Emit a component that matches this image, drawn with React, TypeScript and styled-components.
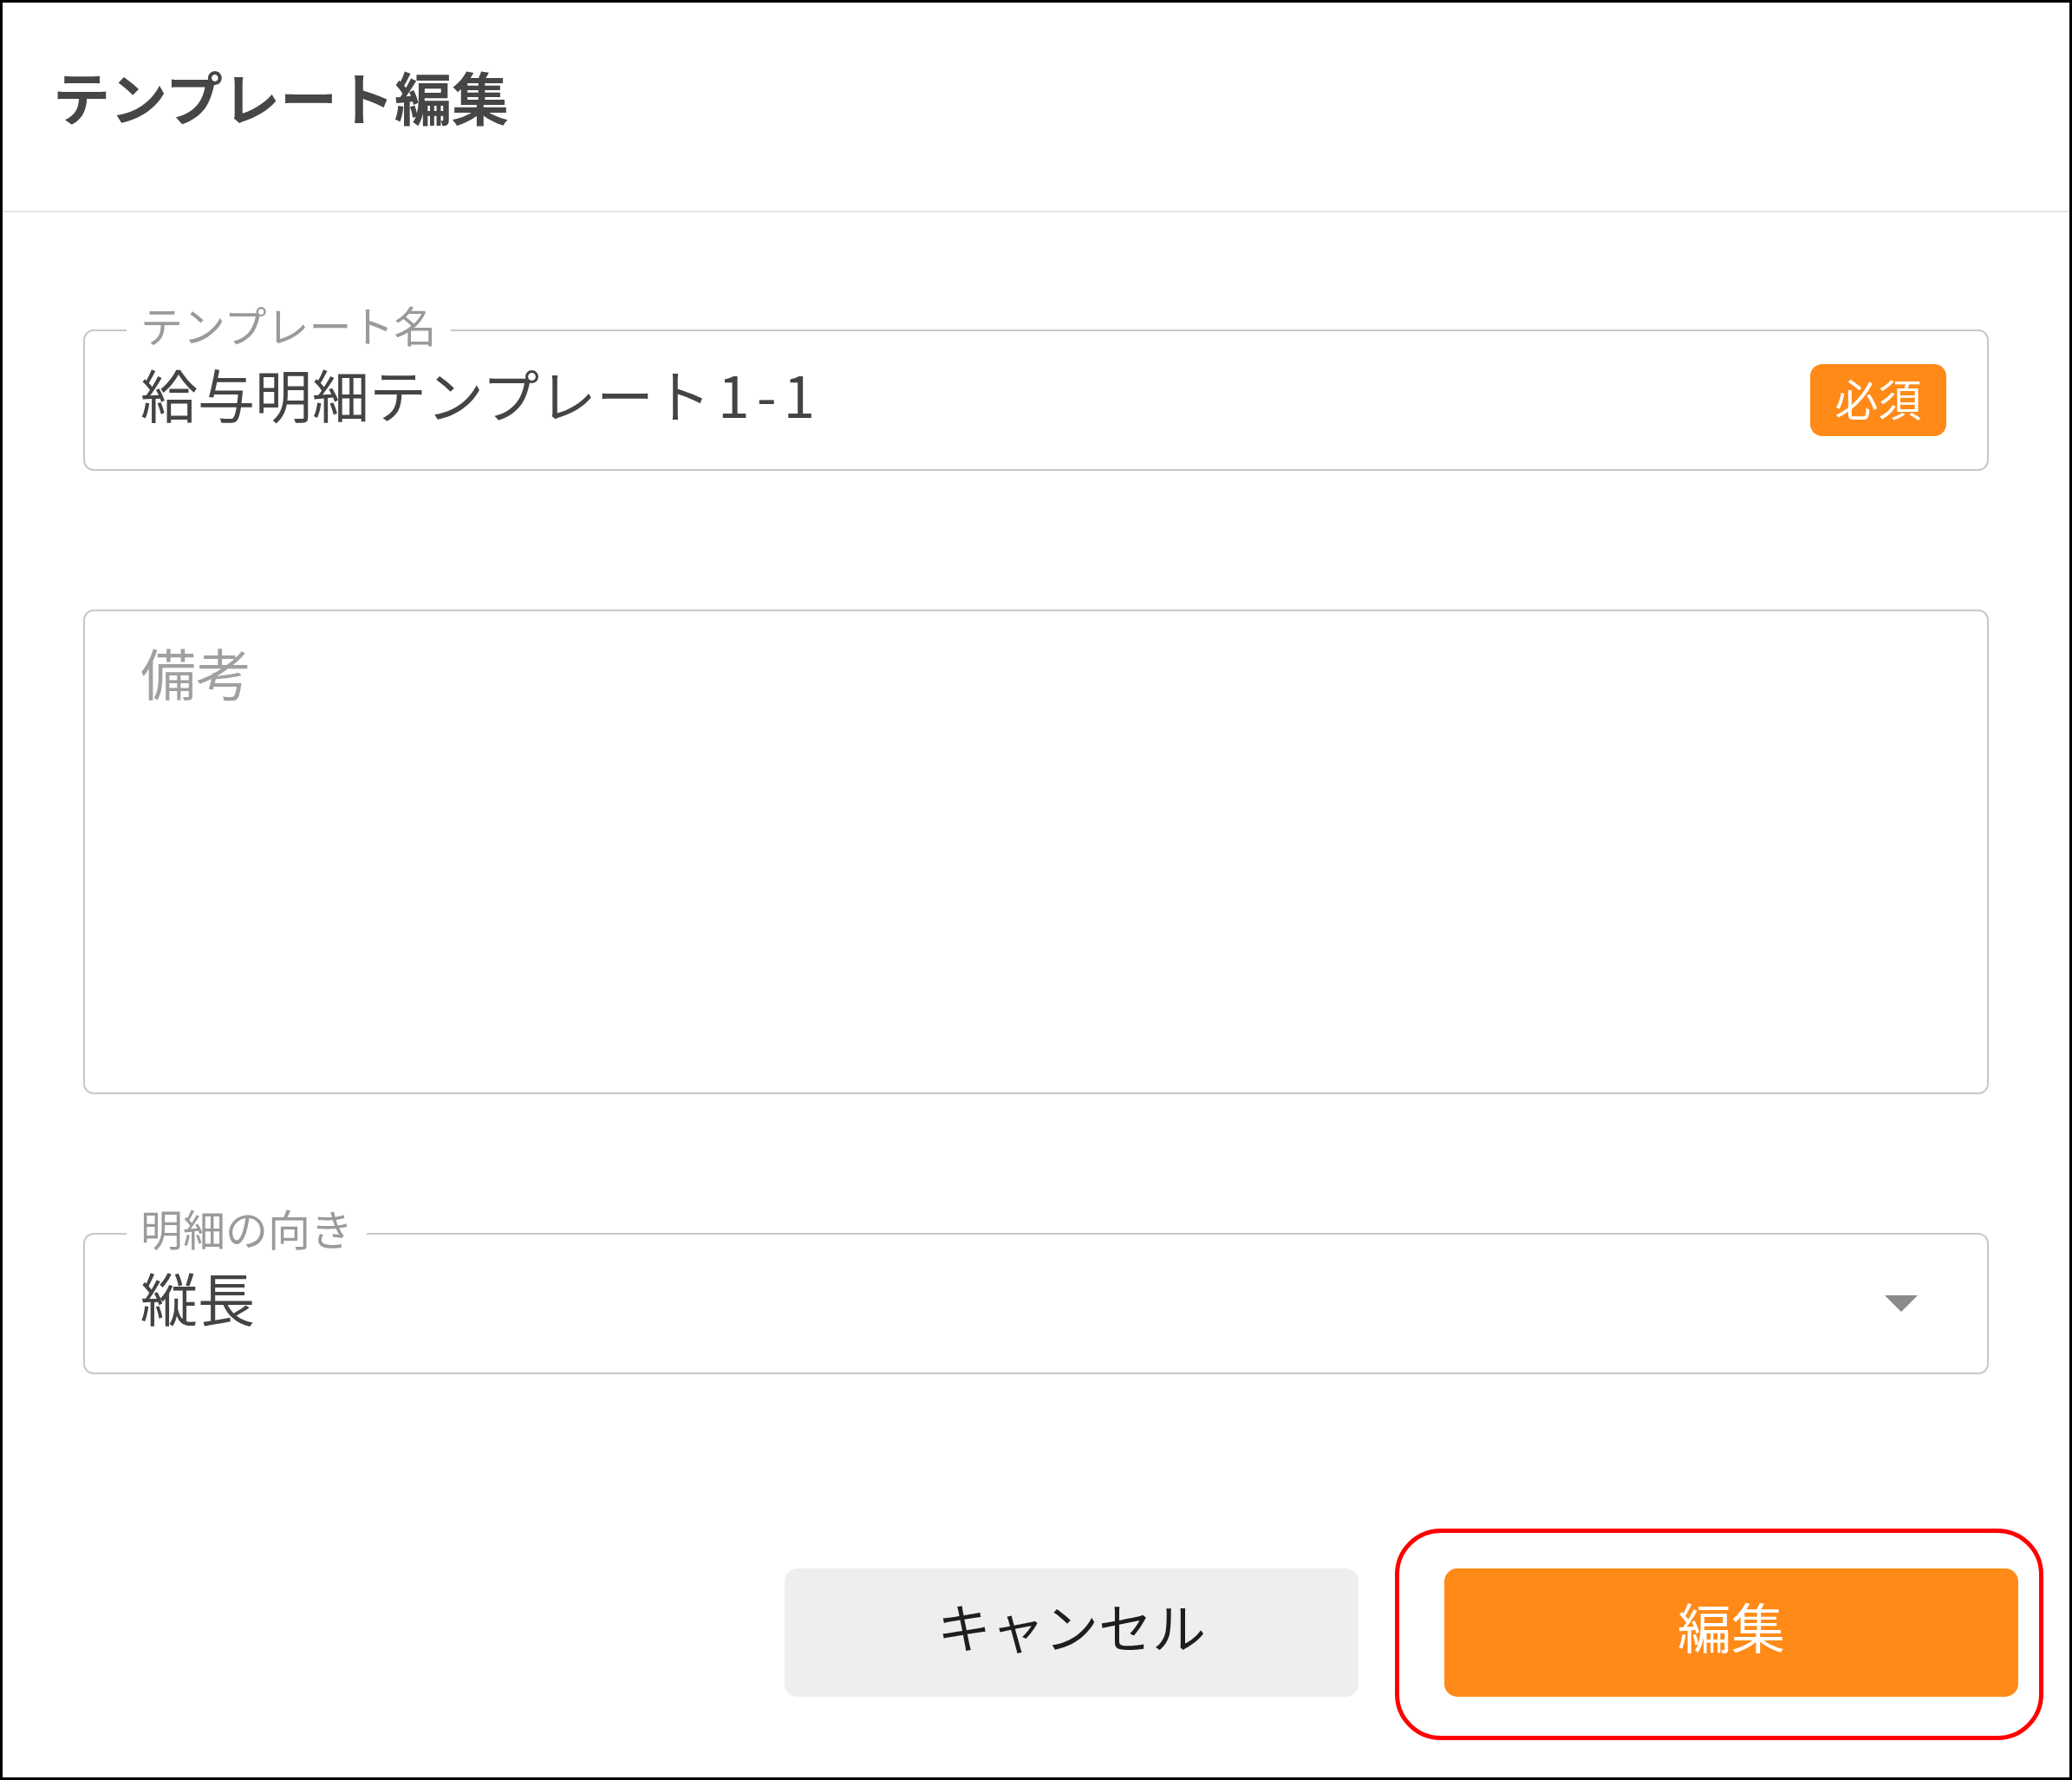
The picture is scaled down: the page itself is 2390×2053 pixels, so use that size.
import React from "react";
import styled, { createGlobalStyle } from "styled-components";

const GlobalStyle = createGlobalStyle`
  html, body { margin: 0; padding: 0; background: #ffffff; }
  * { box-sizing: border-box; }
  body { font-family: "Noto Sans CJK JP", "Noto Sans", sans-serif; }
`;

const FONT = `"Noto Sans CJK JP", "Noto Sans", sans-serif`;

const Frame = styled.div`
  width: 2390px;
  height: 2053px;
  border: 3px solid #000000;
  background: #ffffff;
  display: flex;
  flex-direction: column;
  font-family: ${FONT};
`;

const Header = styled.header`
  height: 242px;
  padding: 61px 0 0 58px;
  border-bottom: 2px solid #e8e8e8;
`;

const Title = styled.h1`
  margin: 0;
  font-size: 66px;
  line-height: 1.4;
  font-weight: 700;
  color: #464646;
`;

const Body = styled.div`
  padding: 135px 93px 0;
  display: flex;
  flex-direction: column;
  gap: 160px;
`;

const Outline = styled.div<{ $h: number; $top?: boolean }>`
  position: relative;
  height: ${(p) => p.$h}px;
  border: 2px solid #c8c8c8;
  border-radius: 12px;
  display: flex;
  align-items: ${(p) => (p.$top ? "flex-start" : "center")};
  padding: 0 47px 0 64px;
`;

const FloatLabel = styled.span`
  position: absolute;
  left: 48px;
  top: -8px;
  transform: translateY(-50%);
  padding: 0 16px;
  background: #ffffff;
  font-size: 49px;
  line-height: 1.2;
  color: #9a9a9a;
`;

const Value = styled.span`
  flex: 1;
  font-size: 66px;
  line-height: 1.4;
  padding-bottom: 16px;
  color: #444444;
`;

const Latin = styled.span`
  letter-spacing: 8px;
  margin-left: 8px;
`;

const Badge = styled.span`
  width: 157px;
  height: 83px;
  border-radius: 14px;
  background: #ff8a17;
  color: #ffffff;
  font-size: 50px;
  padding-bottom: 8px;
  display: flex;
  align-items: center;
  justify-content: center;
`;

const Notes = styled.textarea`
  flex: 1;
  align-self: stretch;
  border: none;
  outline: none;
  resize: none;
  padding: 21px 0 0 0;
  margin: 0;
  background: transparent;
  font-family: ${FONT};
  font-size: 64px;
  line-height: 1.5;
  color: #444444;
  &::placeholder { color: #a0a0a0; }
`;

const Arrow = styled.svg`
  width: 38px;
  height: 19px;
  margin-right: 33px;
  flex: none;
`;

const Footer = styled.div`
  margin-top: 224px;
  padding: 0 59px 0 0;
  display: flex;
  justify-content: flex-end;
  gap: 99px;
`;

const Button = styled.button<{ $primary?: boolean }>`
  width: 662px;
  height: 148px;
  border: none;
  border-radius: 15px;
  background: ${(p) => (p.$primary ? "#ff8a17" : "#eeeeee")};
  color: ${(p) => (p.$primary ? "#ffffff" : "#1e1e1e")};
  font-family: ${FONT};
  font-size: 62px;
  line-height: 1;
  display: flex;
  align-items: center;
  justify-content: center;
  padding: 0 0 16px;
  cursor: pointer;
`;

const Highlight = styled.div`
  position: relative;
`;

const HighlightRing = styled.span`
  position: absolute;
  top: -46px;
  left: -57px;
  right: -29px;
  bottom: -50px;
  border: 5px solid #ff0000;
  border-radius: 53px;
  pointer-events: none;
`;

export default function App() {
  return (
    <>
      <GlobalStyle />
      <Frame>
        <Header>
          <Title>テンプレート編集</Title>
        </Header>
        <Body>
          <Outline $h={163}>
            <FloatLabel>テンプレート名</FloatLabel>
            <Value>
              給与明細テンプレート<Latin>1-1</Latin>
            </Value>
            <Badge>必須</Badge>
          </Outline>
          <Outline $h={559} $top>
            <Notes placeholder="備考" />
          </Outline>
          <Outline $h={163}>
            <FloatLabel>明細の向き</FloatLabel>
            <Value>縦長</Value>
            <Arrow viewBox="0 0 38 19">
              <polygon points="0,0 38,0 19,19" fill="#8a8a8a" />
            </Arrow>
          </Outline>
        </Body>
        <Footer>
          <Button>キャンセル</Button>
          <Highlight>
            <Button $primary>編集</Button>
            <HighlightRing />
          </Highlight>
        </Footer>
      </Frame>
    </>
  );
}
